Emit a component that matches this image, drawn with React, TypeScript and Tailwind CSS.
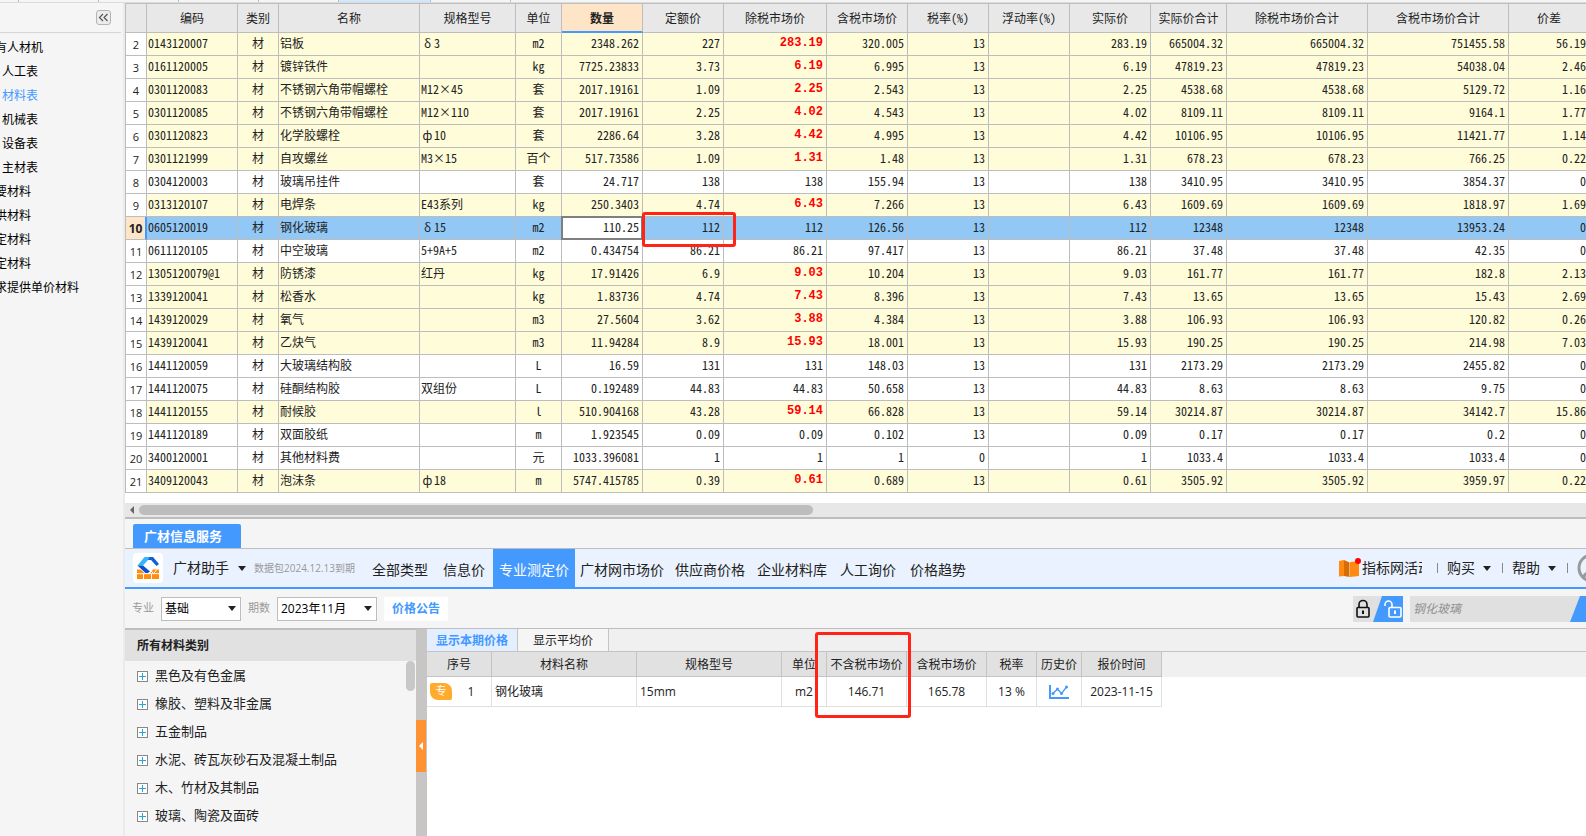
import React from "react";
import clsx from "clsx";

const gridFont = "font-['Noto_Sans_Mono_CJK_SC','Noto_Sans_CJK_SC','DejaVu_Sans_Mono',monospace]";
const uiFont = "font-['Open_Sans','Noto_Sans_CJK_SC',sans-serif]";

type Row = [
  no: number, code: string, name: string, spec: string, unit: string, qty: string, base: string,
  market: string, taxed: string, rate: string, sum: string, sumTaxed: string, diff: string,
];

const rows: Row[] = [
  [2, "0143120007", "铝板", "δ3", "m2", "2348.262", "227", "283.19", "320.005", "13", "665004.32", "751455.58", "56.19"],
  [3, "0161120005", "镀锌铁件", "", "kg", "7725.23833", "3.73", "6.19", "6.995", "13", "47819.23", "54038.04", "2.46"],
  [4, "0301120083", "不锈钢六角带帽螺栓", "M12×45", "套", "2017.19161", "1.09", "2.25", "2.543", "13", "4538.68", "5129.72", "1.16"],
  [5, "0301120085", "不锈钢六角带帽螺栓", "M12×110", "套", "2017.19161", "2.25", "4.02", "4.543", "13", "8109.11", "9164.1", "1.77"],
  [6, "0301120823", "化学胶螺栓", "ф10", "套", "2286.64", "3.28", "4.42", "4.995", "13", "10106.95", "11421.77", "1.14"],
  [7, "0301121999", "自攻螺丝", "M3×15", "百个", "517.73586", "1.09", "1.31", "1.48", "13", "678.23", "766.25", "0.22"],
  [8, "0304120003", "玻璃吊挂件", "", "套", "24.717", "138", "138", "155.94", "13", "3410.95", "3854.37", "0"],
  [9, "0313120107", "电焊条", "E43系列", "kg", "250.3403", "4.74", "6.43", "7.266", "13", "1609.69", "1818.97", "1.69"],
  [10, "0605120019", "钢化玻璃", "δ15", "m2", "110.25", "112", "112", "126.56", "13", "12348", "13953.24", "0"],
  [11, "0611120105", "中空玻璃", "5+9A+5", "m2", "0.434754", "86.21", "86.21", "97.417", "13", "37.48", "42.35", "0"],
  [12, "1305120079@1", "防锈漆", "红丹", "kg", "17.91426", "6.9", "9.03", "10.204", "13", "161.77", "182.8", "2.13"],
  [13, "1339120041", "松香水", "", "kg", "1.83736", "4.74", "7.43", "8.396", "13", "13.65", "15.43", "2.69"],
  [14, "1439120029", "氧气", "", "m3", "27.5604", "3.62", "3.88", "4.384", "13", "106.93", "120.82", "0.26"],
  [15, "1439120041", "乙炔气", "", "m3", "11.94284", "8.9", "15.93", "18.001", "13", "190.25", "214.98", "7.03"],
  [16, "1441120059", "大玻璃结构胶", "", "L", "16.59", "131", "131", "148.03", "13", "2173.29", "2455.82", "0"],
  [17, "1441120075", "硅酮结构胶", "双组份", "L", "0.192489", "44.83", "44.83", "50.658", "13", "8.63", "9.75", "0"],
  [18, "1441120155", "耐候胶", "", "l", "510.904168", "43.28", "59.14", "66.828", "13", "30214.87", "34142.7", "15.86"],
  [19, "1441120189", "双面胶纸", "", "m", "1.923545", "0.09", "0.09", "0.102", "13", "0.17", "0.2", "0"],
  [20, "3400120001", "其他材料费", "", "元", "1033.396081", "1", "1", "1", "0", "1033.4", "1033.4", "0"],
  [21, "3409120043", "泡沫条", "ф18", "m", "5747.415785", "0.39", "0.61", "0.689", "13", "3505.92", "3959.97", "0.22"],
];

const columns: [string, string][] = [
  ["", "w-[21px]"], ["编码", "w-[91px]"], ["类别", "w-[41px]"], ["名称", "w-[141px]"], ["规格型号", "w-[96px]"],
  ["单位", "w-[46px]"], ["数量", "w-[81px]"], ["定额价", "w-[81px]"], ["除税市场价", "w-[103px]"],
  ["含税市场价", "w-[81px]"], ["税率(%)", "w-[81px]"], ["浮动率(%)", "w-[81px]"], ["实际价", "w-[81px]"],
  ["实际价合计", "w-[76px]"], ["除税市场价合计", "w-[141px]"], ["含税市场价合计", "w-[141px]"], ["价差", "w-[81px]"],
];

function TopStrip() {
  return (
    <div className="flex h-[3px] overflow-hidden border-b border-[#dcdcdc] bg-[#f5f5f5]">
      <span className="w-[19px] shrink-0 border-r border-[#bdbdbd]" />
      <span className="w-20 shrink-0 border-r border-[#bdbdbd]" />
      <span className="w-20 shrink-0 border-r border-[#bdbdbd]" />
      <span className="w-20 shrink-0 border-r border-[#bdbdbd]" />
      <span className="w-20 shrink-0 border-r border-[#bdbdbd]" />
      <span className="w-[92px] shrink-0 border-r border-[#bdbdbd] bg-[#cfe7ff]" />
      <span className="w-20 shrink-0 border-r border-[#bdbdbd]" />
    </div>
  );
}

function Sidebar() {
  const items: [string, boolean][] = [
    ["有人材机", true], ["人工表", false], ["材料表", false], ["机械表", false], ["设备表", false], ["主材表", false],
    ["要材料", true], ["供材料", true], ["定材料", true], ["定材料", true], ["求提供单价材料", true],
  ];
  return (
    <aside className="w-[125px] shrink-0 overflow-hidden border-r-2 border-[#ebebeb] bg-[#f5f5f5]">
      <div className="mr-0.5 flex h-[30px] items-center justify-end border-b border-[#d6d6d6] pr-2.5">
        <button aria-label="收起" className="flex size-[15px] items-center justify-center rounded-[3px] border border-[#b4b4b4] bg-[#ececec]">
          <svg viewBox="0 0 11 9" className="h-[9px] w-[11px]" fill="none" stroke="#555" strokeWidth="1.2">
            <path d="M5 1 1.5 4.5 5 8M9.5 1 6 4.5 9.5 8" />
          </svg>
        </button>
      </div>
      <ul className="pt-[3px]">
        {items.map(([label, clipped], i) => (
          <li key={i} className={clsx("flex h-6 items-center", clipped ? "-ml-[5px]" : "pl-0.5")}>
            <button className={clsx("whitespace-nowrap text-xs", label === "材料表" ? "text-[#4499ff]" : "text-black")}>{label}</button>
          </li>
        ))}
      </ul>
    </aside>
  );
}

/* Greek and Cyrillic symbols occupy a full-width slot in the grid. */
function Spec({ text }: { text: string }) {
  if (text[0] === "δ" || text[0] === "ф") {
    return <><span className="inline-block w-[13px] text-center">{text[0]}</span>{text.slice(1)}</>;
  }
  return <>{text}</>;
}

function MaterialRow({ row }: { row: Row }) {
  const [no, code, name, spec, unit, qty, base, market, taxed, rate, sum, sumTaxed, diff] = row;
  const selected = no === 10;
  const changed = diff !== "0";
  const bg = selected ? "bg-[#91c8f6]" : changed ? "bg-[#fffcd9]" : "bg-white";
  const box = "h-[23px] whitespace-nowrap border-b border-r border-[#bdbdbd] p-0 pb-0.5";
  const left = clsx(box, bg, "pl-px text-left");
  const num = clsx(box, bg, "pr-[3px] text-right");
  const mid = clsx(box, bg, "text-center");
  return (
    <tr>
      <th
        scope="row"
        className={clsx(
          "h-[23px] border-b border-[#bdbdbd] p-0 pt-px text-center",
          uiFont,
          selected ? "border-r-2 border-r-[#4499ff] bg-[#fee5c8] text-xs font-bold" : "border-r bg-white text-[11px] font-normal",
        )}
      >
        {no}
      </th>
      <td className={left}>{code}</td>
      <td className={mid}>材</td>
      <td className={left}>{name}</td>
      <td className={left}><Spec text={spec} /></td>
      <td className={mid}>{unit}</td>
      <td className={selected ? clsx(box, "relative bg-white pr-[3px] text-right") : num}>
        {qty}
        {selected && <span className="absolute -inset-px border-2 border-[#7f7f7f]" />}
      </td>
      <td className={clsx(num, selected && "relative")}>
        {base}
        {selected && (
          <span className="absolute -left-px -top-[5px] z-10 h-[35px] w-[94px] rounded-[3px] border-[3px] border-[#ff2416]" />
        )}
      </td>
      <td className={clsx(num, changed && "font-['Liberation_Mono',monospace] font-bold text-[#ff0000]")}>{market}</td>
      <td className={num}>{taxed}</td>
      <td className={num}>{rate}</td>
      <td className={num} />
      <td className={num}>{market}</td>
      <td className={num}>{sum}</td>
      <td className={num}>{sum}</td>
      <td className={num}>{sumTaxed}</td>
      <td className={num}>{diff}</td>
    </tr>
  );
}

function MaterialGrid() {
  return (
    <div className="overflow-hidden bg-white pb-2.5">
      <table className={clsx("w-[1465px] table-fixed border-separate border-spacing-0 border-l border-t border-[#bdbdbd] text-xs leading-4 text-[#222]", gridFont)}>
        <colgroup>
          {columns.map(([, w], i) => <col key={i} className={w} />)}
        </colgroup>
        <thead>
          <tr>
            {columns.map(([label], i) => (
              <th
                key={i}
                className={clsx(
                  "h-[29px] whitespace-nowrap border-r border-[#bdbdbd] p-0 text-center",
                  label === "数量" ? "border-b-2 border-b-[#4499ff] bg-[#fee5c8] font-bold" : "border-b bg-[#e8e8e8] font-normal",
                )}
              >
                {label}
              </th>
            ))}
          </tr>
        </thead>
        <tbody>
          {rows.map((r) => <MaterialRow key={r[0]} row={r} />)}
        </tbody>
      </table>
    </div>
  );
}

function ScrollBar() {
  return (
    <div className="flex h-4 items-center gap-[5px] border-b-2 border-[#bdbdbd] bg-[#e7e7e7] pl-[5px]">
      <svg viewBox="0 0 4 8" className="h-2 w-1" fill="#666"><path d="M4 0v8L0 4z" /></svg>
      <span className="h-2.5 w-[674px] rounded-full bg-[#bdbdbd]" />
    </div>
  );
}

function Caret() {
  return <svg viewBox="0 0 8 5" className="h-[5px] w-2 shrink-0" fill="#222"><path d="M0 0h8L4 5z" /></svg>;
}

function Logo() {
  return (
    <span className="flex size-[30px] shrink-0 items-center justify-center rounded bg-white">
      <svg viewBox="0 0 24 24" className="size-6">
        <path d="M8.500 1H17l-3 3h-2L7 9.500H1.500z" fill="#33b5ff" />
        <path d="M13.500 1H17l6 7-2.500 2L15 4h-3z" fill="#0f5fdc" />
        <path d="M1.500 9.500H7l7 6L10.500 18z" fill="#0a50d0" />
        <path d="M1 13.500h3.500l4.500 4h5l3-4h6V23H1z" fill="#ff8c0a" />
        <path d="M1 17.700h22M7.500 18v5M15.500 18v5M14 13.500l3.500 4 3.500-4" stroke="#fff" strokeWidth="1" fill="none" />
      </svg>
    </span>
  );
}

function ServiceBar() {
  const tabs = ["全部类型", "信息价", "专业测定价", "广材网市场价", "供应商价格", "企业材料库", "人工询价", "价格趋势"];
  const pads = ["pl-[17px] pr-[15px]", "pr-2", "bg-[#4499ff] px-[6px] text-white", "pl-[5px] pr-[11px]", "pr-3", "pr-[13px]", "pr-[14px]", ""];
  return (
    <div className="flex h-10 items-stretch overflow-hidden border-b-2 border-[#4499ff] bg-[#ebf2ff] pl-2 text-sm text-[#222]">
      <div className="flex shrink-0 items-center">
        <Logo />
        <button className="ml-2.5 flex items-center gap-[9px]">广材助手<Caret /></button>
        <span className="ml-2 text-[10px] text-[#999]">数据包2024.12.13到期</span>
      </div>
      <nav className="flex shrink-0 items-stretch">
        {tabs.map((t, i) => <button key={t} className={clsx("whitespace-nowrap pt-1", pads[i])}>{t}</button>)}
      </nav>
      <div className="-mr-[21px] ml-auto flex shrink-0 items-center">
        <button className="flex items-center gap-px">
          <svg viewBox="0 0 22 20" className="h-5 w-[22px]">
            <path d="M0 3 5 2v16l-5 .5zM11 4l9-1v15l-9 1z" fill="#ff8a12" />
            <path d="M5 2l5.500 2.500V19L5 18z" fill="#d96c00" />
            <circle cx="19" cy="3" r="3" fill="#ff0000" />
          </svg>
          <span className="w-[60px] overflow-hidden whitespace-nowrap text-left">指标网活动</span>
        </button>
        <span className="ml-[15px] mr-[9px] h-2.5 w-px bg-[#888]" />
        <button className="flex items-center gap-2">购买<Caret /></button>
        <span className="ml-[11px] mr-[9px] h-2.5 w-px bg-[#888]" />
        <button className="flex items-center gap-2">帮助<Caret /></button>
        <span className="ml-[11px] mr-[9px] h-2.5 w-px bg-[#888]" />
        <svg viewBox="0 0 30 30" className="size-[30px]" fill="none" stroke="#999" strokeWidth="3">
          <circle cx="15" cy="15" r="13" />
          <circle cx="15" cy="12" r="4" />
          <path d="M7 24c1-6 15-6 16 0" />
        </svg>
      </div>
    </div>
  );
}

function Picker({ id, label, value, box }: { id: string; label: string; value: string; box: string }) {
  return (
    <div className="flex items-center gap-[7px]">
      <label htmlFor={id} className="text-[11px] text-[#999]">{label}</label>
      <div className={clsx("relative flex items-center", box)}>
        <select id={id} defaultValue={value} className="h-6 w-full appearance-none border border-[#bdbdbd] bg-white pl-[3px] text-xs text-black">
          <option>{value}</option>
        </select>
        <span className="pointer-events-none absolute right-[5px]"><Caret /></span>
      </div>
    </div>
  );
}

function FilterBar() {
  return (
    <div className="flex h-10 items-center border-b border-[#bdbdbd] bg-[#f5f5f5] pl-[7px]">
      <Picker id="major" label="专业" value="基础" box="w-20" />
      <span className="w-[7px]" />
      <Picker id="period" label="期数" value="2023年11月" box="w-[100px]" />
      <button className="ml-[7px] h-6 bg-white px-2 text-xs font-bold text-[#4499ff]">价格公告</button>
      <div className="ml-auto flex items-center">
        <button aria-label="锁定" className="h-[26px] w-[50px]">
          <svg viewBox="0 0 50 26" className="h-[26px] w-[50px]" fill="none">
            <path d="M0 0h50v26H0z" fill="#e0e0e0" />
            <path d="M29 0h21v26H20z" fill="#4499ff" />
            <rect x="4" y="11.500" width="12" height="9.500" rx="1" stroke="#111" strokeWidth="1.600" />
            <path d="M6 11V8.500a4 4 0 0 1 8 0V11" stroke="#111" strokeWidth="1.600" />
            <path d="M10 14.500v3.500" stroke="#111" strokeWidth="2" />
            <rect x="36" y="11.500" width="12" height="9.500" rx="1" stroke="#fff" strokeWidth="1.600" />
            <path d="M32 10V8.500a3.500 3.500 0 0 1 7 0V11" stroke="#fff" strokeWidth="1.600" />
            <path d="M42 14.500v3.500" stroke="#fff" strokeWidth="2" />
          </svg>
        </button>
        <div className="ml-[7px] flex h-[26px] bg-[#e0e0e0]">
          <input aria-label="搜索材料" placeholder="钢化玻璃" className="w-40 bg-transparent pl-[3px] text-xs italic placeholder:text-[#909090]" />
          <button aria-label="搜索" className="w-4">
            <svg viewBox="0 0 16 26" className="h-[26px] w-4"><path d="M10 0h6v26H0z" fill="#4499ff" /></svg>
          </button>
        </div>
      </div>
    </div>
  );
}

function CategoryPanel() {
  const items = ["黑色及有色金属", "橡胶、塑料及非金属", "五金制品", "水泥、砖瓦灰砂石及混凝土制品", "木、竹材及其制品", "玻璃、陶瓷及面砖"];
  return (
    <section className="w-[291px] shrink-0 border-t border-[#bdbdbd] bg-[#f5f5f5]">
      <h2 className="flex h-[31px] items-center bg-[#e1e1e1] pl-3 text-xs font-bold text-[#222]">所有材料类别</h2>
      <div className="flex justify-between pr-px">
        <ul className="pl-3 pt-px">
          {items.map((t) => (
            <li key={t} className="flex h-7 items-center">
              <button className="flex items-center gap-[7px] text-[13px] text-[#222]">
                <svg viewBox="0 0 11 11" className="size-[11px]" fill="none">
                  <rect x=".5" y=".5" width="10" height="10" fill="#fff" stroke="#888" />
                  <path d="M2 5.500h7M5.500 2v7" stroke="#22a7d8" />
                </svg>
                {t}
              </button>
            </li>
          ))}
        </ul>
        <span className="h-[30px] w-[9px] rounded-full bg-[#c8c8c8]" />
      </div>
    </section>
  );
}

function PricePanel() {
  const cols: [string, string][] = [
    ["序号", "w-[65px]"], ["材料名称", "w-[145px]"], ["规格型号", "w-[145px]"], ["单位", "w-[45px]"], ["不含税市场价", "w-20"],
    ["含税市场价", "w-20"], ["税率", "w-[50px]"], ["历史价", "w-[45px]"], ["报价时间", "w-20"],
  ];
  const td = "h-[30px] border-b border-r border-[#e0e0e0] p-0 text-center";
  return (
    <section className="min-w-0 grow bg-white text-xs text-[#222]">
      <div className="flex h-[23px] border-b border-[#c4c4c4] bg-[#f0f0f0]">
        <button className="w-[91px] border-r border-[#c4c4c4] bg-[#e3efff] pt-0.5 font-bold text-[#4499ff]">显示本期价格</button>
        <button className="w-[91px] border-r border-[#c4c4c4] bg-[#f5f5f5] pt-0.5">显示平均价</button>
      </div>
      <div className="bg-[linear-gradient(#f0f0f0_25px,#fff_25px)]">
        <table className="w-[735px] table-fixed border-separate border-spacing-0">
          <colgroup>{cols.map(([l, w]) => <col key={l} className={w} />)}</colgroup>
          <thead>
            <tr>
              {cols.map(([l]) => (
                <th key={l} className="relative h-[25px] whitespace-nowrap border-b border-r border-[#c4c4c4] bg-[#e1e1e1] p-0 pt-0.5 font-normal">
                  {l}
                  {l === "不含税市场价" && (
                    <span className="absolute -left-3 -top-5 z-10 h-[86px] w-24 rounded-[3px] border-[3px] border-[#ff2416]" />
                  )}
                </th>
              ))}
            </tr>
          </thead>
          <tbody>
            <tr>
              <td className={td}>
                <div className="flex items-center pl-[3px]">
                  <span className="flex h-[17px] w-[22px] items-center justify-center rounded-bl-lg rounded-tr-lg rounded-br-[2px] rounded-tl-[2px] bg-[#ffab2e] text-[11px] text-white">专</span>
                  <span className="w-[38px] text-center">1</span>
                </div>
              </td>
              <td className="h-[30px] border-b border-r border-[#e0e0e0] p-0 pl-[3px]">钢化玻璃</td>
              <td className="h-[30px] border-b border-r border-[#e0e0e0] p-0 pl-[3px]">15mm</td>
              <td className={td}>m2</td>
              <td className={td}>146.71</td>
              <td className={td}>165.78</td>
              <td className={td}>13 %</td>
              <td className={td}>
                <button aria-label="历史价" className="flex w-full justify-center">
                  <svg viewBox="0 0 20 14" className="h-3.5 w-5" fill="none" stroke="#4499ff">
                    <path d="M1 0v13h19" strokeWidth="2" />
                    <path d="M4 8.500 8.500 4l4 4.500L17.500 2" strokeWidth="1.300" />
                    <g fill="#4499ff" stroke="none">
                      <circle cx="4" cy="8.500" r="1.500" /><circle cx="8.500" cy="4" r="1.500" />
                      <circle cx="12.500" cy="8.500" r="1.500" /><circle cx="17.500" cy="2" r="1.500" />
                    </g>
                  </svg>
                </button>
              </td>
              <td className={td}>2023-11-15</td>
            </tr>
          </tbody>
        </table>
      </div>
    </section>
  );
}

export default function App() {
  return (
    <div className={clsx("flex min-h-screen flex-col overflow-hidden bg-[#f5f5f5]", uiFont)}>
      <TopStrip />
      <div className="flex grow">
        <Sidebar />
        <main className="flex min-w-0 grow flex-col">
          <MaterialGrid />
          <ScrollBar />
          <div className="flex border-b border-[#bdbdbd] pl-2 pt-[5px]">
            <button className="h-6 w-[108px] rounded-t-[2px] bg-[#4499ff] pl-[11px] pt-0.5 text-left text-[13px] font-bold text-white">广材信息服务</button>
          </div>
          <ServiceBar />
          <FilterBar />
          <div className="flex grow">
            <CategoryPanel />
            <div className="flex w-[11px] shrink-0 flex-col bg-[#c8c6c4] pt-[91px]">
              <button aria-label="收起类别" className="flex h-[52px] w-2.5 items-center justify-center bg-[#ff9233]">
                <svg viewBox="0 0 4 8" className="h-2 w-1" fill="#fff"><path d="M4 0v8L0 4z" /></svg>
              </button>
            </div>
            <PricePanel />
          </div>
        </main>
      </div>
    </div>
  );
}
